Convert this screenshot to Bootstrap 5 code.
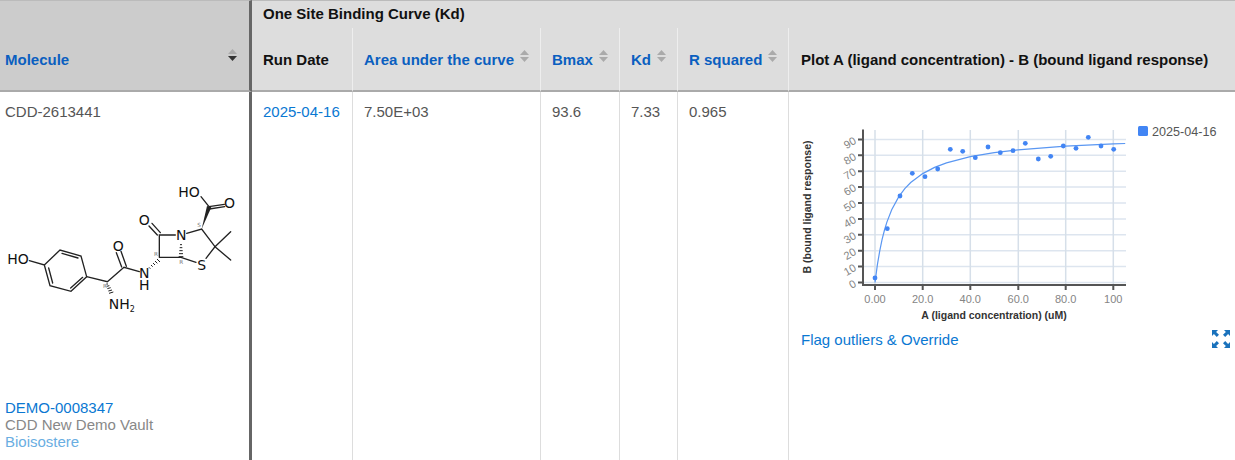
<!DOCTYPE html>
<html lang="en">
<head>
<meta charset="utf-8">
<title>One Site Binding Curve</title>
<link href="https://cdn.jsdelivr.net/npm/bootstrap@5.3.0/dist/css/bootstrap.min.css" rel="stylesheet">
<style>
html,body{height:460px;overflow:hidden;background:#fff}
body{font-family:"Liberation Sans",Arial,sans-serif;font-size:15px;color:#555}
.table.bind-table{width:1235px;table-layout:fixed;border-collapse:separate;border-spacing:0;margin:0;font-size:15px;line-height:17px}
.table.bind-table>:not(caption)>*>*{padding:0 11px;border:0;box-shadow:none;color:#555;background:#fff}
.table.bind-table>thead>tr>*{background:#ddd;color:#111;font-weight:700;vertical-align:middle;white-space:nowrap}
.table.bind-table>thead>tr:first-child>*{height:28px;border-top:1px solid #bbb;padding-bottom:2px}
.table.bind-table>thead>tr:last-child>*{height:64px;border-bottom:2px solid #aaa;border-right:1px solid #eee}
.table.bind-table>thead>tr>.mol-head{background:#ccc;border-right:3px solid #666;border-bottom:2px solid #aaa;padding:28px 0 0 5px}
.table.bind-table>thead>tr:last-child>.last-col{border-right:0;padding-left:12px}
.table.bind-table>tbody>tr>td{border-right:1px solid #ddd;vertical-align:top;padding-top:11px}
.table.bind-table>tbody>tr>.mol-cell{border-right:3px solid #666;padding:11px 0 10px 5px}
.table.bind-table>tbody>tr>.plot-cell{border-right:0;padding:0}
.mol-inner{height:347px}
.mol-pic{display:block;width:250px;height:150px;margin:50px 0 0 -5px}
.head-link{color:#0a5fc0;text-decoration:none}
.body-link{color:#0a78d2;text-decoration:none}
.mol-meta{color:#888}
.mol-tag{color:#6aaee2}
.sorter{display:inline-block;width:9px;height:12px;margin-left:6px;position:relative;top:-5px;vertical-align:middle}
.mol-sorter{margin-right:12px}
.chart-box{display:block;width:446px;height:235px}
.flag-row{padding:0 5px 0 12px;height:24px}
.full-icon{width:18px;height:18px;display:block}
.ax-t{font:11px "Liberation Sans",Arial,sans-serif;fill:#858585}
.ax-n{font:bold 10.5px "Liberation Sans",Arial,sans-serif;fill:#333}
.leg-t{font:12.6px "Liberation Sans",Arial,sans-serif;fill:#555}
.mol-t{font:42px "DejaVu Sans",sans-serif;fill:#111}
.mol-s{font:24px "DejaVu Sans",sans-serif;fill:#111}
.mol-r{font:17px "DejaVu Sans",sans-serif;fill:#777}
</style>
</head>
<body>
<table class="table bind-table">
<colgroup><col style="width:252px"><col style="width:101px"><col style="width:188px"><col style="width:79px"><col style="width:58px"><col style="width:111px"><col style="width:446px"></colgroup>
<thead>
<tr>
<th rowspan="2" class="mol-head">
<div class="d-flex justify-content-between align-items-center"><a class="head-link" href="#">Molecule</a>
<svg class="sorter mol-sorter" viewBox="0 0 9 12"><path d="M4.5 0 9 5H0Z" fill="#aaa"/><path d="M0 7h9L4.5 12Z" fill="#333"/></svg></div>
</th>
<th colspan="6">One Site Binding Curve (Kd)</th>
</tr>
<tr>
<th>Run Date</th>
<th><a class="head-link" href="#">Area under the curve</a><svg class="sorter" viewBox="0 0 9 12"><path d="M4.5 0 9 5H0Z" fill="#aaa"/><path d="M0 7h9L4.5 12Z" fill="#aaa"/></svg></th>
<th><a class="head-link" href="#">Bmax</a><svg class="sorter" viewBox="0 0 9 12"><path d="M4.5 0 9 5H0Z" fill="#aaa"/><path d="M0 7h9L4.5 12Z" fill="#aaa"/></svg></th>
<th><a class="head-link" href="#">Kd</a><svg class="sorter" viewBox="0 0 9 12"><path d="M4.5 0 9 5H0Z" fill="#aaa"/><path d="M0 7h9L4.5 12Z" fill="#aaa"/></svg></th>
<th><a class="head-link" href="#">R squared</a><svg class="sorter" viewBox="0 0 9 12"><path d="M4.5 0 9 5H0Z" fill="#aaa"/><path d="M0 7h9L4.5 12Z" fill="#aaa"/></svg></th>
<th class="last-col">Plot A (ligand concentration) - B (bound ligand response)</th>
</tr>
</thead>
<tbody>
<tr>
<td class="mol-cell">
<div class="mol-inner d-flex flex-column">
<div>CDD-2613441</div>
<svg class="mol-pic" viewBox="0 0 750 450">
<g fill="none" stroke="#222" stroke-width="4" stroke-linecap="round">
<path d="M88 272 133 285 180 240 243 258 260 320 213 364 150 347 133 285"/>
<path d="M186 250 234 264M248 322 212 354M158 339 146 294"/>
<path d="M260 320 322 335 372 292 418 305"/>
<path d="M365 291 349 248M379 289 363 244"/>
<path d="M478 262 478 195 526 195M478 262 543 262 588 277M618 265 645 230 605 177 560 190"/>
<path d="M472 195 447 168M481 188 456 160"/>
<path d="M645 230 692 185M645 230 692 270"/>
<path d="M627 110 673 103M628 117 674 110M627 110 603 80"/>
</g>
<path d="M605 177 621 108 634 112Z" fill="#222"/>
<g stroke="#222" stroke-width="3">
<path d="M447 292 451 296M453 285 458 290M459 279 465 285M465 273 472 280M471 267 480 276"/>
<path d="M536 260h14M537 251h12M538 242h10M539 233h8M540 224h6"/>
<path d="M319 342h5M320 349 328 347M322 356 332 353M325 363 336 360M327 370 340 366"/>
</g>
<text class="mol-t" x="22" y="283">HO</text>
<text class="mol-t" x="417" y="323">N<tspan x="417" dy="38">H</tspan></text>
<text class="mol-t" x="326" y="417">NH<tspan class="mol-s" dy="8">2</tspan></text>
<text class="mol-t" x="338" y="243">O</text>
<text class="mol-t" x="416" y="165">O</text>
<text class="mol-t" x="528" y="210">N</text>
<text class="mol-t" x="592" y="299">S</text>
<text class="mol-t" x="535" y="81">HO</text>
<text class="mol-t" x="672" y="115">O</text>
<text class="mol-r" x="462" y="258">R</text>
<text class="mol-r" x="538" y="281">R</text>
<text class="mol-r" x="592" y="170">S</text>
<text class="mol-r" x="309" y="353">R</text>
</svg>
<div class="mt-auto">
<a class="body-link d-block" href="#">DEMO-0008347</a>
<div class="mol-meta">CDD New Demo Vault</div>
<div class="mol-tag">Bioisostere</div>
</div>
</div>
</td>
<td><a class="body-link" href="#">2025-04-16</a></td>
<td>7.50E+03</td>
<td>93.6</td>
<td>7.33</td>
<td>0.965</td>
<td class="plot-cell">
<svg class="chart-box" viewBox="789 92 446 235">
<path fill="none" stroke="#dde5ef" stroke-width="1.5" d="M863 282.5H1126M863 266.6H1126M863 250.7H1126M863 234.8H1126M863 218.9H1126M863 203H1126M863 187.1H1126M863 171.2H1126M863 155.3H1126M863 139.4H1126"/>
<path fill="none" stroke="#d6dfe9" stroke-width="1.5" d="M875 130V285M922.7 130V285M970.3 130V285M1018.3 130V285M1065.7 130V285M1113.3 130V285"/>
<path fill="none" stroke="#555" stroke-width="2" d="M863 129.5V285H1126M858 282.5H863M858 266.6H863M858 250.7H863M858 234.8H863M858 218.9H863M858 203H863M858 187.1H863M858 171.2H863M858 155.3H863M858 139.4H863M875 285V290M922.7 285V290M970.3 285V290M1018.3 285V290M1065.7 285V290M1113.3 285V290"/>
<polyline fill="none" stroke="#5a97f2" stroke-width="1.2" points="875,282.5 877.4,264.6 879.8,250.6 882.1,239.3 884.5,230 886.9,222.1 891.7,209.8 898.8,196.6 904.8,188.7 910.7,182.5 922.7,173.6 934.6,167.4 946.5,162.9 970.3,156.7 994.2,152.7 1018,149.9 1065.6,146.2 1113.3,143.8 1125.2,143.5"/>
<g fill="#4285f4">
<circle cx="875" cy="278" r="2.4"/><circle cx="887.3" cy="228.7" r="2.4"/><circle cx="900" cy="196" r="2.4"/><circle cx="912.3" cy="173.3" r="2.4"/><circle cx="925" cy="176.7" r="2.4"/><circle cx="937.7" cy="169" r="2.4"/><circle cx="950.3" cy="149.3" r="2.4"/><circle cx="962.7" cy="151.3" r="2.4"/><circle cx="975.3" cy="157.7" r="2.4"/><circle cx="988" cy="147" r="2.4"/><circle cx="1000.3" cy="152.7" r="2.4"/><circle cx="1013" cy="150.7" r="2.4"/><circle cx="1025.3" cy="143.3" r="2.4"/><circle cx="1038.3" cy="159" r="2.4"/><circle cx="1050.7" cy="156.3" r="2.4"/><circle cx="1063.3" cy="146" r="2.4"/><circle cx="1076" cy="148.3" r="2.4"/><circle cx="1088.3" cy="137.3" r="2.4"/><circle cx="1101" cy="146" r="2.4"/><circle cx="1113.7" cy="149.3" r="2.4"/>
</g>
<g class="ax-t" text-anchor="end">
<text transform="translate(857 286) rotate(-30)">0</text>
<text transform="translate(857 270) rotate(-30)">10</text>
<text transform="translate(857 254) rotate(-30)">20</text>
<text transform="translate(857 238) rotate(-30)">30</text>
<text transform="translate(857 222) rotate(-30)">40</text>
<text transform="translate(857 206) rotate(-30)">50</text>
<text transform="translate(857 190) rotate(-30)">60</text>
<text transform="translate(857 174) rotate(-30)">70</text>
<text transform="translate(857 159) rotate(-30)">80</text>
<text transform="translate(857 143) rotate(-30)">90</text>
</g>
<g class="ax-t" text-anchor="middle">
<text x="875" y="303">0.00</text><text x="922.7" y="303">20.0</text><text x="970.3" y="303">40.0</text><text x="1018.3" y="303">60.0</text><text x="1065.7" y="303">80.0</text><text x="1113.3" y="303">100</text>
</g>
<text class="ax-n" x="994" y="319" text-anchor="middle">A (ligand concentration) (uM)</text>
<text class="ax-n" transform="translate(811 207) rotate(-90)" text-anchor="middle">B (bound ligand response)</text>
<rect x="1138" y="126" width="10" height="10" rx="1.5" fill="#4285f4"/>
<text class="leg-t" x="1152" y="136">2025-04-16</text>
</svg>
<div class="flag-row d-flex justify-content-between align-items-center">
<a class="body-link" href="#">Flag outliers &amp; Override</a>
<svg class="full-icon" viewBox="0 0 18 18" fill="#1a72bc"><path d="M0 0H6L4.1 1.9 7 4.8 4.8 7 1.9 4.1 0 6ZM18 0V6L16.1 4.1 13.2 7 11 4.8 13.9 1.9 12 0ZM0 18V12L1.9 13.9 4.8 11 7 13.2 4.1 16.1 6 18ZM18 18H12L13.9 16.1 11 13.2 13.2 11 16.1 13.9 18 12Z"/></svg>
</div>
</td>
</tr>
</tbody>
</table>
</body>
</html>
